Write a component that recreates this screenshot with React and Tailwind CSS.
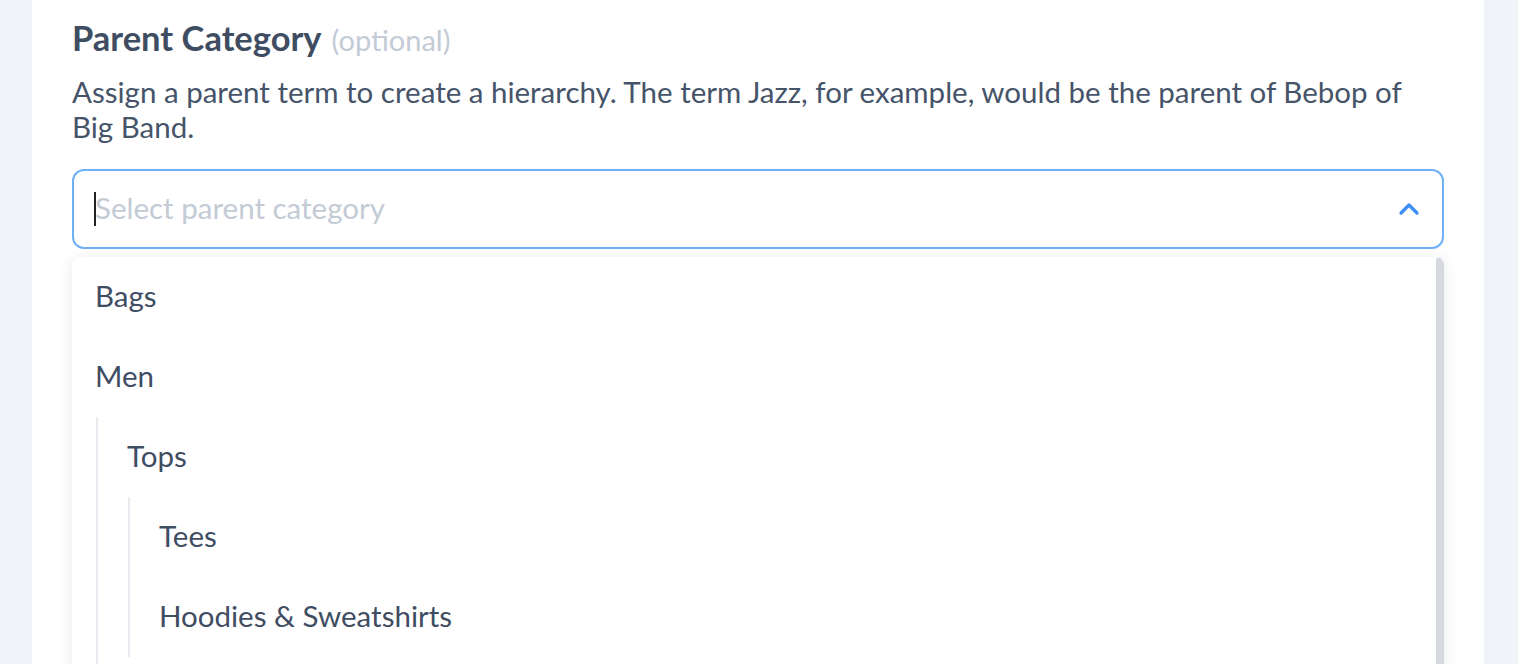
import React from 'react';

const font = { fontFamily: '"Lato", "Open Sans", sans-serif' };

const Item = ({ label }) => (
  <div className="h-[80px] flex items-center pl-[23px] text-[29.5px] text-[#3f4d63]">{label}</div>
);

export default function App() {
  return (
    <div className="h-[664px] w-full bg-[#f0f4f8] flex pl-[32px] pr-[34px] overflow-hidden" style={font}>
      <div className="flex-1 bg-white px-[40px] pt-[18px]">
        {/* Label */}
        <div className="flex items-baseline gap-[10px]">
          <h2 className="text-[34.5px] font-bold text-[#3f4d63] leading-[40px]">Parent Category</h2>
          <span className="text-[29px] text-[#c3cbd5]">(optional)</span>
        </div>
        <p className="mt-[12px] text-[29.5px] leading-[35px] text-[#46546a] pr-[30px]">
          Assign a parent term to create a hierarchy. The term Jazz, for example, would be the parent of Bebop of Big Band.
        </p>

        {/* Select */}
        <div className="mt-[25px] h-[80px] border-2 border-[#6fb0f7] rounded-[12px] flex items-center pl-[20px] pr-[22px]">
          <span className="w-[2px] h-[34px] bg-[#222]" />
          <span className="text-[29.5px] text-[#c3cbd5] flex-1 -ml-px">Select parent category</span>
          <svg width="22" height="14" viewBox="0 0 22 14" fill="none">
            <path d="M3 11 L11 3 L19 11" stroke="#3b8ef5" strokeWidth="3.2" strokeLinecap="round" strokeLinejoin="round" />
          </svg>
        </div>

        {/* Dropdown */}
        <div className="relative mt-[8px] rounded-t-[8px] bg-white shadow-[0_2px_14px_rgba(30,41,59,0.10)] h-[460px] overflow-hidden">
          <div className="absolute right-0 top-0 w-[8px] h-full bg-[#d6d9e2] rounded-full" />
          <Item label="Bags" />
          <Item label="Men" />
          <div className="ml-[24px] border-l-2 border-[#e8ecf0] pl-[6px] pb-[40px]">
            <Item label="Tops" />
            <div className="ml-[24px] border-l-2 border-[#e8ecf0] pl-[6px]">
              <Item label="Tees" />
              <Item label="Hoodies & Sweatshirts" />
            </div>
          </div>
        </div>
      </div>
    </div>
  );
}
